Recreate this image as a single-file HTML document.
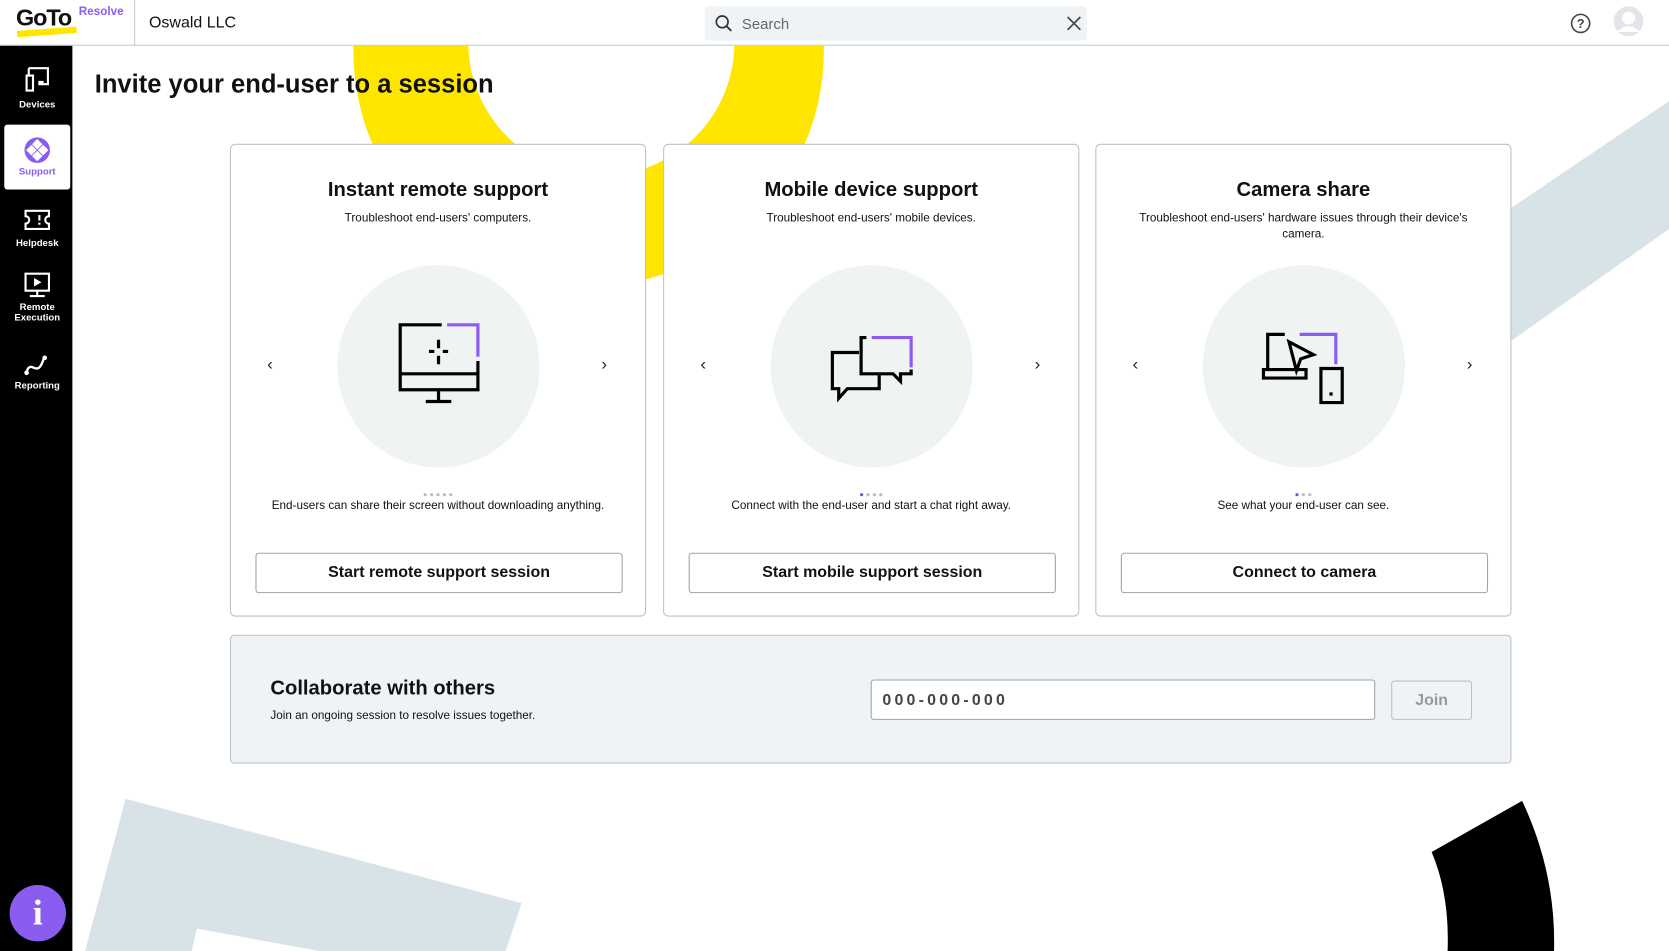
<!DOCTYPE html>
<html><head><meta charset="utf-8"><style>
*{box-sizing:border-box;margin:0;padding:0}
html,body{width:1669px;height:951px;overflow:hidden;background:#fff;font-family:"Liberation Sans",sans-serif;color:#111}
#w{width:1568px;height:893px;transform:scale(1.06441,1.06495);transform-origin:0 0;position:relative}
.hdr{position:absolute;left:0;top:0;width:1568px;height:43px;border-bottom:1px solid #c3ccd5;background:#fff;z-index:3}
.side{position:absolute;left:0;top:43px;width:68px;height:850px;background:#000;z-index:3}
.nav{position:absolute;left:4px;width:62px;text-align:center;color:#fff;font-size:9px;font-weight:bold}
.card{position:absolute;top:135px;width:391px;height:444px;border:1px solid #b8c2cc;border-radius:5px;background:#fff;text-align:center;z-index:2}
.card h2{font-size:19px;margin-top:32px;font-weight:bold}
.card p.s{font-size:11px;margin-top:8px;padding:0 40px;line-height:15px}
.circ{position:absolute;left:100px;top:113px;width:190px;height:190px;border-radius:50%;background:#f0f3f4}
.arr{position:absolute;top:198px;font-size:16px;color:#222}
.dots{position:absolute;top:327px;width:100%;font-size:0}
.dots i{display:inline-block;width:3px;height:3px;border-radius:50%;background:#bbb;margin:0 1.5px}
.dots i.a{background:#7b4ae8}
.desc{position:absolute;top:333px;width:100%;font-size:11px}
.btn{position:absolute;left:23px;top:383px;width:345px;height:38px;border:1px solid #9aa5af;border-radius:3px;font-size:15px;font-weight:bold;line-height:36px}
</style></head><body><div id="w">
<svg style="position:absolute;left:0;top:0;z-index:1" width="1568" height="893">
<path fill-rule="evenodd" fill="#ffe600" d="M553,48 m-221,0 a221,221 0 1,0 442,0 a221,221 0 1,0 -442,0 Z M565,40 m-125,0 a125,125 0 1,0 250,0 a125,125 0 1,0 -250,0 Z"/>
<polygon fill="#d8e3e8" points="1420,195 1568,95 1568,215 1420,320"/>
<polygon fill="#d8e3e8" points="118,750 490,848 475,893 80,893"/>
<polygon fill="#fff" points="185,872 300,893 180,893"/>
<path fill="#000" d="M1345,800 L1430,752 Q1462,820 1460,893 L1360,893 Q1362,840 1345,800 Z"/>
</svg>
<div class="hdr">
<div style="position:absolute;left:15px;top:4px;font-size:22px;font-weight:bold;letter-spacing:-1px">GoTo</div>
<div style="position:absolute;left:16px;top:27px;width:56px;height:6px;background:#ffe600;transform:rotate(-4deg)"></div>
<div style="position:absolute;left:74px;top:5px;font-size:11px;font-weight:bold;color:#8a5cf0">Resolve</div>
<div style="position:absolute;left:126px;top:0;width:1px;height:43px;background:#c3ccd5"></div>
<div style="position:absolute;left:140px;top:13px;font-size:15px">Oswald LLC</div>
<div style="position:absolute;left:662px;top:6px;width:359px;height:32px;background:#f0f3f5;border-radius:3px">
<svg style="position:absolute;left:9px;top:7px" width="18" height="18"><circle cx="7.5" cy="7.5" r="5.5" fill="none" stroke="#333" stroke-width="1.6"/><path d="M11.5 11.5L16 16" stroke="#333" stroke-width="1.8"/></svg>
<span style="position:absolute;left:35px;top:8px;font-size:14px;color:#666">Search</span>
<svg style="position:absolute;left:340px;top:9px" width="14" height="14"><path d="M1 1L13 13M13 1L1 13" stroke="#444" stroke-width="1.6"/></svg></div>
<svg style="position:absolute;left:1475px;top:12px" width="20" height="20"><circle cx="10" cy="10" r="8.5" fill="none" stroke="#444" stroke-width="1.5"/><text x="10" y="14.5" font-size="12" text-anchor="middle" font-family="Liberation Sans" fill="#444" font-weight="bold">?</text></svg>
<svg style="position:absolute;left:1515px;top:5px" width="30" height="30"><circle cx="15" cy="15" r="14" fill="#e2e6ea"/><circle cx="15" cy="12" r="6" fill="#fff"/><path d="M4 25 Q15 14 26 25" fill="#fff"/></svg>
</div>
<div class="side">
<div class="nav" style="top:18px"><svg width="26" height="28"><path d="M5 3h18v15h-9M5 3v6M3 10h6v14H3z M14 16h5" fill="none" stroke="#fff" stroke-width="2"/></svg><div style="margin-top:2px">Devices</div></div>
<div class="nav" style="top:74px;height:61px;background:#fff;border-radius:3px;color:#8a5cf0;padding-top:11px"><svg width="26" height="26"><circle cx="13" cy="13" r="12" fill="#8a5cf0"/><g fill="#fff"><rect x="9.5" y="4" width="7" height="7" transform="rotate(45 13 7.5)"/><rect x="9.5" y="15" width="7" height="7" transform="rotate(45 13 18.5)"/><rect x="4" y="9.5" width="7" height="7" transform="rotate(45 7.5 13)"/><rect x="15" y="9.5" width="7" height="7" transform="rotate(45 18.5 13)"/></g></svg><div>Support</div></div>
<div class="nav" style="top:152px"><svg width="28" height="24"><path d="M3 3h22v5a3 3 0 0 0 0 7v5H3v-5a3 3 0 0 0 0-7z M16 7v5M16 14v2" fill="none" stroke="#fff" stroke-width="2"/></svg><div style="margin-top:2px">Helpdesk</div></div>
<div class="nav" style="top:212px"><svg width="28" height="26"><path d="M3 2h22v16H3z M14 18v4M7 23h14" fill="none" stroke="#fff" stroke-width="2"/><path d="M11 6l7 4-7 4z" fill="#fff"/></svg><div>Remote<br>Execution</div></div>
<div class="nav" style="top:288px"><svg width="28" height="24"><path d="M4 18q2-6 6-4t6 0 4-8" fill="none" stroke="#fff" stroke-width="2.2"/><circle cx="4" cy="19" r="2.2" fill="#fff"/><circle cx="21" cy="5" r="2.2" fill="#fff"/></svg><div>Reporting</div></div>
<div style="position:absolute;left:9px;top:788px;width:53px;height:53px;border-radius:50%;background:#8a5cf0;color:#fff;font-size:34px;font-weight:bold;text-align:center;line-height:53px;font-family:'Liberation Serif',serif">i</div>
</div>
<div style="position:absolute;left:89px;top:66px;font-size:24px;font-weight:bold;z-index:2">Invite your end-user to a session</div>

<div class="card" style="left:216px"><h2>Instant remote support</h2><p class="s">Troubleshoot end-users' computers.</p>
<div class="circ"></div><span class="arr" style="left:34px">‹</span><span class="arr" style="left:348px">›</span>
<svg style="position:absolute;left:155px;top:165px" width="80" height="80"><g fill="none" stroke="#000" stroke-width="3"><path d="M43 4H4v61h73V38M4 50h73M40 65v11M28 76h24M40 18v8M40 33v8M31 29h5M44 29h5"/></g><path d="M48 4h29v30" fill="none" stroke="#8a5cf0" stroke-width="3"/></svg>
<div class="dots" style="left:0"><i></i><i></i><i></i><i></i><i></i></div>
<div class="desc">End-users can share their screen without downloading anything.</div><div class="btn">Start remote support session</div></div>

<div class="card" style="left:623px"><h2>Mobile device support</h2><p class="s">Troubleshoot end-users' mobile devices.</p>
<div class="circ"></div><span class="arr" style="left:34px">‹</span><span class="arr" style="left:348px">›</span>
<svg style="position:absolute;left:155px;top:175px" width="85" height="75"><g fill="none" stroke="#000" stroke-width="3"><path d="M35 6H30v34h30l7 7v-7h10v-4"/><path d="M28 20H3v34h6v9l8-9h30V40"/></g><path d="M40 6h37v28" fill="none" stroke="#8a5cf0" stroke-width="3"/></svg>
<div class="dots"><i class="a"></i><i></i><i></i><i></i></div>
<div class="desc">Connect with the end-user and start a chat right away.</div><div class="btn">Start mobile support session</div></div>

<div class="card" style="left:1029px"><h2>Camera share</h2><p class="s">Troubleshoot end-users' hardware issues through their device's camera.</p>
<div class="circ"></div><span class="arr" style="left:34px">‹</span><span class="arr" style="left:348px">›</span>
<svg style="position:absolute;left:155px;top:172px" width="85" height="75"><g fill="none" stroke="#000" stroke-width="3"><path d="M22 6H6v32M2 39h40v8H2zM56 38h20v32H56zM64 62h3"/><path d="M26 13l7 27 4-11 12-4z"/></g><path d="M36 6h34v28" fill="none" stroke="#8a5cf0" stroke-width="3"/></svg>
<div class="dots"><i class="a"></i><i></i><i></i></div>
<div class="desc">See what your end-user can see.</div><div class="btn">Connect to camera</div></div>

<div style="position:absolute;left:216px;top:596px;width:1204px;height:121px;background:#f0f3f5;border:1px solid #b8c2cc;border-radius:4px;z-index:2">
<div style="position:absolute;left:37px;top:39px;font-size:19px;font-weight:bold">Collaborate with others</div>
<div style="position:absolute;left:37px;top:69px;font-size:11px">Join an ongoing session to resolve issues together.</div>
<div style="position:absolute;left:601px;top:41px;width:474px;height:38px;background:#fff;border:1px solid #9aa5af;border-radius:3px;padding:10px 10px;font-size:15px;letter-spacing:3px;color:#444;font-weight:bold">000-000-000</div>
<div style="position:absolute;left:1090px;top:42px;width:76px;height:37px;border:1px solid #b8c2cc;border-radius:3px;text-align:center;line-height:35px;font-size:15px;color:#999;font-weight:bold">Join</div>
</div>
</div></body></html>
